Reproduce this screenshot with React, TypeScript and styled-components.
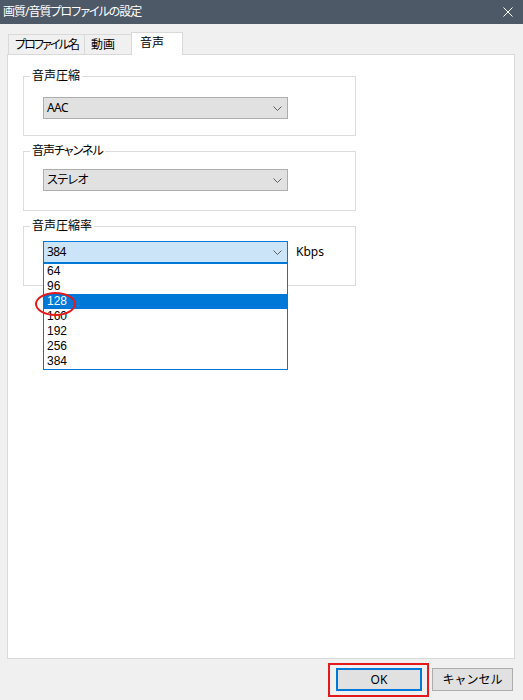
import React from "react";
import styled, { createGlobalStyle } from "styled-components";

const GlobalStyle = createGlobalStyle`
  html, body { margin: 0; padding: 0; background: #f0f0f0; }
  body {
    font-family: "Noto Sans", "Noto Sans CJK JP", sans-serif;
    font-size: 12px;
    color: #000;
    font-feature-settings: "palt";
  }
  * { box-sizing: border-box; }
`;

const Window = styled.div`
  width: 523px;
  height: 700px;
  display: flex;
  flex-direction: column;
  background: #f0f0f0;
  overflow: hidden;
`;

const TitleBar = styled.div`
  height: 24px;
  flex: none;
  background: #4e5968;
  color: #fff;
  display: flex;
  align-items: center;
  justify-content: space-between;
  padding: 0 10px 0 3px;
  font-size: 12px;
  line-height: 16px;
  letter-spacing: -1px;
`;

const CloseIcon = styled.svg`
  display: block;
  width: 10px;
  height: 10px;
`;

const Body = styled.div`
  flex: 1;
  min-height: 0;
  display: flex;
  flex-direction: column;
  padding: 8px 8px 0 7px;
`;

const TabStrip = styled.div`
  display: flex;
  align-items: flex-end;
  height: 23px;
  padding-left: 1px;
  margin-bottom: -1px;
  position: relative;
  z-index: 1;
`;

const Tab = styled.div<{ $active?: boolean; $w: number; $ls?: number }>`
  width: ${(p) => p.$w}px;
  height: ${(p) => (p.$active ? 23 : 21)}px;
  margin-left: -1px;
  &:first-child { margin-left: 0; }
  display: flex;
  align-items: center;
  padding: 0 0 ${(p) => (p.$active ? 2 : 0)}px ${(p) => (p.$active ? 8 : 6)}px;
  background: ${(p) => (p.$active ? "#fff" : "#f0f0f0")};
  border: 1px solid #d9d9d9;
  border-bottom: ${(p) => (p.$active ? "none" : "1px solid #d9d9d9")};
  font-size: 12px;
  line-height: 16px;
  letter-spacing: ${(p) => p.$ls ?? 0}px;
  white-space: nowrap;
`;

const Panel = styled.div`
  flex: 1;
  background: #fff;
  border: 1px solid #d9d9d9;
  padding: 13px 0 0 15px;
  display: flex;
  flex-direction: column;
  gap: 7px;
`;

const Group = styled.fieldset<{ $pt: number; $pb: number }>`
  margin: 0;
  width: 333px;
  min-width: 0;
  border: 1px solid #dcdcdc;
  padding: ${(p) => p.$pt}px 0 ${(p) => p.$pb}px 6px;
`;

const Legend = styled.legend<{ $ls?: number }>`
  padding: 0 2px;
  font-size: 12px;
  line-height: 16px;
  letter-spacing: ${(p) => p.$ls ?? 0}px;
`;

const FieldRow = styled.div`
  display: flex;
  align-items: center;
  gap: 8px;
  margin-left: 13px;
`;

const ComboWrap = styled.div`
  position: relative;
  width: 245px;
  height: 22px;
`;

const Combo = styled.div<{ $open?: boolean }>`
  width: 100%;
  height: 100%;
  display: flex;
  align-items: center;
  justify-content: space-between;
  padding: 0 5px 0 3px;
  background: ${(p) => (p.$open ? "#cce4f7" : "#e1e1e1")};
  border: 1px solid ${(p) => (p.$open ? "#0078d7" : "#adadad")};
  font-size: 12px;
  line-height: 16px;
`;

const ComboText = styled.span`
  letter-spacing: -0.6px;
`;

const Chevron = styled.svg`
  display: block;
  width: 9px;
  height: 5px;
`;

const Unit = styled.span`
  font-size: 12px;
  line-height: 16px;
`;

const DropList = styled.ul`
  position: absolute;
  left: 0;
  top: 100%;
  width: 100%;
  margin: 0;
  padding: 0;
  list-style: none;
  background: #fff;
  border: 1px solid #0078d7;
  z-index: 2;
`;

const Option = styled.li<{ $selected?: boolean }>`
  height: 15px;
  line-height: 15px;
  padding-left: 3px;
  font-family: "Liberation Sans", "Noto Sans", sans-serif;
  font-size: 12px;
  background: ${(p) => (p.$selected ? "#0078d7" : "transparent")};
  color: ${(p) => (p.$selected ? "#fff" : "#000")};
`;

const RedEllipse = styled.div`
  position: absolute;
  left: -9px;
  top: 28px;
  width: 41px;
  height: 24px;
  border: 2px solid #e3191c;
  border-radius: 50%;
  pointer-events: none;
`;

const Footer = styled.div`
  height: 41px;
  flex: none;
  display: flex;
  justify-content: flex-end;
  align-items: flex-start;
  gap: 10px;
  padding: 9px 10px 0 0;
`;

const ButtonWrap = styled.div`
  position: relative;
`;

const Button = styled.button<{ $default?: boolean; $w: number }>`
  width: ${(p) => p.$w}px;
  height: 23px;
  margin: 0;
  padding: 0;
  background: #e1e1e1;
  border: ${(p) => (p.$default ? "2px solid #0078d7" : "1px solid #adadad")};
  font-family: inherit;
  font-size: 12px;
  line-height: 16px;
  color: #000;
  display: flex;
  align-items: center;
  justify-content: center;
`;

const RedRect = styled.div`
  position: absolute;
  inset: -5px -7px -6px -8px;
  border: 2px solid #e3191c;
  pointer-events: none;
`;

const ChevronDown = () => (
  <Chevron viewBox="0 0 9 5">
    <polyline points="0.5,0.5 4.5,4.5 8.5,0.5" fill="none" stroke="#606060" strokeWidth="1" />
  </Chevron>
);

const ComboBox: React.FC<{ value: string; open?: boolean; children?: React.ReactNode }> = ({
  value,
  open,
  children,
}) => (
  <ComboWrap>
    <Combo $open={open}>
      <ComboText>{value}</ComboText>
      <ChevronDown />
    </Combo>
    {children}
  </ComboWrap>
);

const rates = ["64", "96", "128", "160", "192", "256", "384"];

export default function App() {
  return (
    <>
      <GlobalStyle />
      <Window>
        <TitleBar>
          <span>画質/音質プロファイルの設定</span>
          <CloseIcon viewBox="0 0 10 10">
            <path d="M0.5 0.5 L9.5 9.5 M9.5 0.5 L0.5 9.5" stroke="#fff" strokeWidth="1" fill="none" />
          </CloseIcon>
        </TitleBar>
        <Body>
          <TabStrip>
            <Tab $w={77} $ls={-1.9}>
              プロファイル名
            </Tab>
            <Tab $w={48}>動画</Tab>
            <Tab $w={52} $active>
              音声
            </Tab>
          </TabStrip>
          <Panel>
            <Group $pt={13} $pb={16}>
              <Legend>音声圧縮</Legend>
              <FieldRow>
                <ComboBox value="AAC" />
              </FieldRow>
            </Group>
            <Group $pt={10} $pb={19}>
              <Legend $ls={-1}>音声チャンネル</Legend>
              <FieldRow>
                <ComboBox value="ステレオ" />
              </FieldRow>
            </Group>
            <Group $pt={7} $pb={22}>
              <Legend>音声圧縮率</Legend>
              <FieldRow>
                <ComboBox value="384" open>
                  <DropList>
                    {rates.map((r) => (
                      <Option key={r} $selected={r === "128"}>
                        {r}
                      </Option>
                    ))}
                    <RedEllipse />
                  </DropList>
                </ComboBox>
                <Unit>Kbps</Unit>
              </FieldRow>
            </Group>
          </Panel>
        </Body>
        <Footer>
          <ButtonWrap>
            <Button $default $w={86}>
              OK
            </Button>
            <RedRect />
          </ButtonWrap>
          <Button $w={81}>キャンセル</Button>
        </Footer>
      </Window>
    </>
  );
}
